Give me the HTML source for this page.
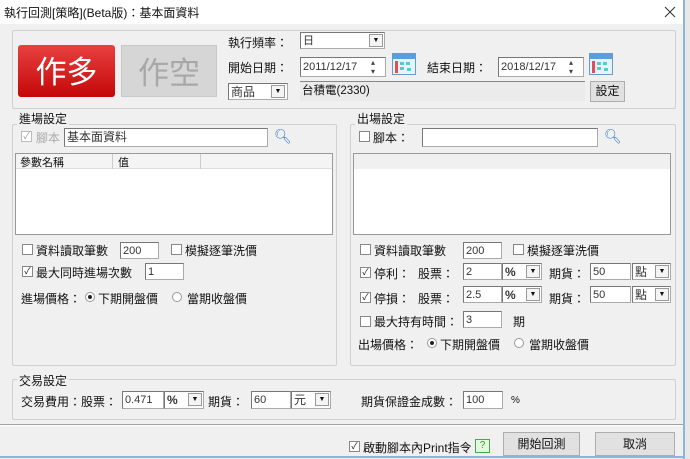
<!DOCTYPE html>
<html><head><meta charset="utf-8"><style>
*{box-sizing:border-box;margin:0;padding:0}
body{width:690px;height:459px;background:#f0f0f0;font-family:"Liberation Sans","Noto Sans CJK TC",sans-serif;font-size:12px;color:#111;position:relative;overflow:hidden}
.a{position:absolute;white-space:nowrap}
.inp{position:absolute;background:#fff;border:1px solid #aaa;border-top-color:#777;border-left-color:#777;font-size:11px;padding-left:2px;line-height:16px;color:#333}
.grp{position:absolute;border:1px solid #d0d0d0;border-radius:2px}
.gl{position:absolute;background:#f0f0f0;padding:0 2px;font-size:12px}
.cb{position:absolute;width:11px;height:11px;border:1px solid #888;background:#fff;font-size:9px;line-height:9px;text-align:center}
.dd{position:absolute;width:14px;height:13px;border:1px solid #999;background:#f4f4f4;font-size:7px;text-align:center;line-height:12px}
.rad{position:absolute;width:10px;height:10px;border-radius:50%;border:1px solid #999;background:#fff}
.btn{position:absolute;border:1px solid #adadad;background:#e1e1e1;text-align:center}
.cal{position:absolute;width:24px;height:22px;border:1px solid #6a9ac8;background:linear-gradient(#5a9ee0 0 5px,#e8f2fb 5px);}
.cal i{position:absolute;width:4px;height:3px;background:#5cc}
.cal b{position:absolute;left:2px;top:7px;width:3px;height:12px;background:#e05050}
</style></head><body>
<div class="a" style="left:0;top:0;width:690px;height:24px;background:#fff"></div>
<div class="a" style="left:4px;top:4px;font-size:12px">執行回測[策略](Beta版)：基本面資料</div>
<svg class="a" style="left:664px;top:6px" width="12" height="12"><path d="M1 1L11 11M11 1L1 11" stroke="#333" stroke-width="1"/></svg>
<div class="a" style="left:683px;top:0;width:2px;height:459px;background:#8fb3d9"></div>
<div class="a" style="left:0;top:456px;width:685px;height:2px;background:#8fb3d9"></div>
<div class="a" style="left:685px;top:0;width:5px;height:459px;background:#e8e8e8"></div>

<div class="grp" style="left:12px;top:30px;width:664px;height:79px"></div>
<div class="a" style="left:18px;top:45px;width:97px;height:52px;border-radius:3px;background:linear-gradient(#e84040,#c40808);color:#fff;font-size:31px;text-align:center;line-height:50px;font-family:'Noto Sans CJK TC',sans-serif">作多</div>
<div class="a" style="left:121px;top:45px;width:96px;height:52px;background:#d6d6d6;border:1px solid #c8c8c8;color:#a8a8a8;font-size:31px;text-align:center;line-height:50px;font-family:'Noto Sans CJK TC',sans-serif">作空</div>
<div class="a" style="left:228px;top:34px">執行頻率：</div>
<div class="inp" style="left:300px;top:32px;width:85px;height:17px">日</div><div class="dd" style="left:369px;top:34px">▼</div>
<div class="a" style="left:228px;top:59px">開始日期：</div>
<div class="inp" style="left:300px;top:57px;width:86px;height:20px;line-height:18px">2011/12/17</div>
<div class="a" style="left:371px;top:58px;font-size:8px;line-height:9px;color:#444">▴<br>▾</div>
<div class="cal" style="left:392px;top:53px"><b></b><i style="left:7px;top:8px"></i><i style="left:13px;top:8px"></i><i style="left:7px;top:13px"></i><i style="left:14px;top:14px"></i></div>
<div class="a" style="left:427px;top:59px">結束日期：</div>
<div class="inp" style="left:498px;top:57px;width:86px;height:20px;line-height:18px">2018/12/17</div>
<div class="a" style="left:569px;top:58px;font-size:8px;line-height:9px;color:#444">▴<br>▾</div>
<div class="cal" style="left:589px;top:53px"><b></b><i style="left:7px;top:8px"></i><i style="left:13px;top:8px"></i><i style="left:7px;top:13px"></i><i style="left:14px;top:14px"></i></div>
<div class="inp" style="left:228px;top:83px;width:60px;height:17px;font-size:12px">商品</div><div class="dd" style="left:271px;top:85px">▼</div>
<div class="a" style="left:300px;top:81px;width:285px;height:20px;background:#ebebeb;border-top:1px solid #888;padding-left:2px;line-height:18px;font-size:11.5px">台積電(2330)</div>
<div class="btn" style="left:590px;top:81px;width:35px;height:21px;line-height:19px">設定</div>

<div class="grp" style="left:12px;top:124px;width:325px;height:242px"></div>
<div class="gl" style="left:17px;top:110px">進場設定</div>
<div class="cb" style="left:21px;top:131px;color:#999;border-color:#bbb">✓</div>
<div class="a" style="left:36px;top:129px;color:#aaa">腳本</div>
<div class="inp" style="left:64px;top:128px;width:204px;height:19px;font-size:12px">基本面資料</div>
<div class="a" style="left:274px;top:128px;font-size:14px;color:#3a7cc0">&#x1F50D;&#xFE0E;</div>
<div class="a" style="left:15px;top:153px;width:318px;height:82px;background:#fff;border:1px solid #999"></div>
<div class="a" style="left:16px;top:154px;width:316px;height:15px;background:#f4f4f4;border-bottom:1px solid #ddd"></div>
<div class="a" style="left:112px;top:154px;width:1px;height:15px;background:#ccc"></div>
<div class="a" style="left:200px;top:154px;width:1px;height:15px;background:#ccc"></div>
<div class="a" style="left:20px;top:154px;font-size:11px">參數名稱</div>
<div class="a" style="left:118px;top:154px;font-size:11px">值</div>
<div class="cb" style="left:22px;top:244px"></div><div class="a" style="left:36px;top:242px">資料讀取筆數</div>
<div class="inp" style="left:120px;top:242px;width:39px;height:17px">200</div>
<div class="cb" style="left:171px;top:244px"></div><div class="a" style="left:185px;top:242px">模擬逐筆洗價</div>
<div class="cb" style="left:22px;top:266px">✓</div><div class="a" style="left:36px;top:264px">最大同時進場次數</div>
<div class="inp" style="left:145px;top:263px;width:39px;height:17px">1</div>
<div class="a" style="left:21px;top:290px">進場價格：</div>
<div class="rad" style="left:85px;top:292px"><div style="margin:2px;width:4px;height:4px;border-radius:50%;background:#222"></div></div>
<div class="a" style="left:98px;top:290px">下期開盤價</div>
<div class="rad" style="left:172px;top:292px"></div><div class="a" style="left:187px;top:290px">當期收盤價</div>

<div class="grp" style="left:350px;top:124px;width:326px;height:242px"></div>
<div class="gl" style="left:355px;top:110px">出場設定</div>
<div class="cb" style="left:359px;top:131px"></div><div class="a" style="left:373px;top:129px">腳本：</div>
<div class="inp" style="left:422px;top:128px;width:176px;height:19px"></div>
<div class="a" style="left:604px;top:128px;font-size:14px;color:#3a7cc0">&#x1F50D;&#xFE0E;</div>
<div class="a" style="left:353px;top:153px;width:318px;height:82px;background:#fff;border:1px solid #999"></div>
<div class="a" style="left:354px;top:154px;width:316px;height:15px;background:#f0f0f0"></div>
<div class="cb" style="left:360px;top:244px"></div><div class="a" style="left:374px;top:242px">資料讀取筆數</div>
<div class="inp" style="left:463px;top:242px;width:39px;height:17px">200</div>
<div class="cb" style="left:513px;top:244px"></div><div class="a" style="left:527px;top:242px">模擬逐筆洗價</div>
<div class="cb" style="left:360px;top:267px">✓</div><div class="a" style="left:374px;top:265px">停利：</div><div class="a" style="left:418px;top:265px">股票：</div>
<div class="inp" style="left:463px;top:263px;width:39px;height:17px">2</div>
<div class="inp" style="left:502px;top:263px;width:40px;height:17px;font-size:12px;font-weight:bold">%</div><div class="dd" style="left:526px;top:265px">▼</div>
<div class="a" style="left:549px;top:265px">期貨：</div>
<div class="inp" style="left:590px;top:263px;width:41px;height:17px">50</div>
<div class="inp" style="left:632px;top:263px;width:39px;height:17px;font-size:12px">點</div><div class="dd" style="left:655px;top:265px">▼</div>
<div class="cb" style="left:360px;top:292px">✓</div><div class="a" style="left:374px;top:290px">停損：</div><div class="a" style="left:418px;top:290px">股票：</div>
<div class="inp" style="left:463px;top:286px;width:39px;height:17px">2.5</div>
<div class="inp" style="left:502px;top:286px;width:40px;height:17px;font-size:12px;font-weight:bold">%</div><div class="dd" style="left:526px;top:288px">▼</div>
<div class="a" style="left:549px;top:290px">期貨：</div>
<div class="inp" style="left:590px;top:286px;width:41px;height:17px">50</div>
<div class="inp" style="left:632px;top:286px;width:39px;height:17px;font-size:12px">點</div><div class="dd" style="left:655px;top:288px">▼</div>
<div class="cb" style="left:360px;top:316px"></div><div class="a" style="left:374px;top:313px">最大持有時間：</div>
<div class="inp" style="left:463px;top:311px;width:39px;height:17px">3</div>
<div class="a" style="left:513px;top:313px">期</div>
<div class="a" style="left:358px;top:336px">出場價格：</div>
<div class="rad" style="left:427px;top:338px"><div style="margin:2px;width:4px;height:4px;border-radius:50%;background:#222"></div></div>
<div class="a" style="left:440px;top:336px">下期開盤價</div>
<div class="rad" style="left:514px;top:338px"></div><div class="a" style="left:529px;top:336px">當期收盤價</div>

<div class="grp" style="left:12px;top:379px;width:664px;height:41px"></div>
<div class="gl" style="left:17px;top:372px">交易設定</div>
<div class="a" style="left:21px;top:393px">交易費用：股票：</div>
<div class="inp" style="left:122px;top:391px;width:42px;height:18px">0.471</div>
<div class="inp" style="left:164px;top:391px;width:40px;height:18px;font-size:12px;font-weight:bold">%</div><div class="dd" style="left:188px;top:393px">▼</div>
<div class="a" style="left:208px;top:393px">期貨：</div>
<div class="inp" style="left:251px;top:391px;width:40px;height:18px">60</div>
<div class="inp" style="left:291px;top:391px;width:40px;height:18px;font-size:12px">元</div><div class="dd" style="left:315px;top:393px">▼</div>
<div class="a" style="left:361px;top:393px">期貨保證金成數：</div>
<div class="inp" style="left:463px;top:391px;width:40px;height:18px">100</div>
<div class="a" style="left:511px;top:395px;font-size:10px">%</div>

<div class="a" style="left:0;top:424px;width:683px;height:1px;background:#a0a0a0"></div>
<div class="a" style="left:0;top:425px;width:683px;height:1px;background:#fff"></div>
<div class="cb" style="left:349px;top:441px">✓</div><div class="a" style="left:363px;top:439px">啟動腳本內Print指令</div>
<div class="a" style="left:475px;top:439px;width:15px;height:14px;border:1px solid #4a4;color:#2a2;font-size:10px;text-align:center;line-height:12px;background:#e6f6e0">?</div>
<div class="btn" style="left:503px;top:432px;width:77px;height:24px;line-height:22px">開始回測</div>
<div class="btn" style="left:595px;top:432px;width:80px;height:24px;line-height:22px">取消</div>
</body></html>
